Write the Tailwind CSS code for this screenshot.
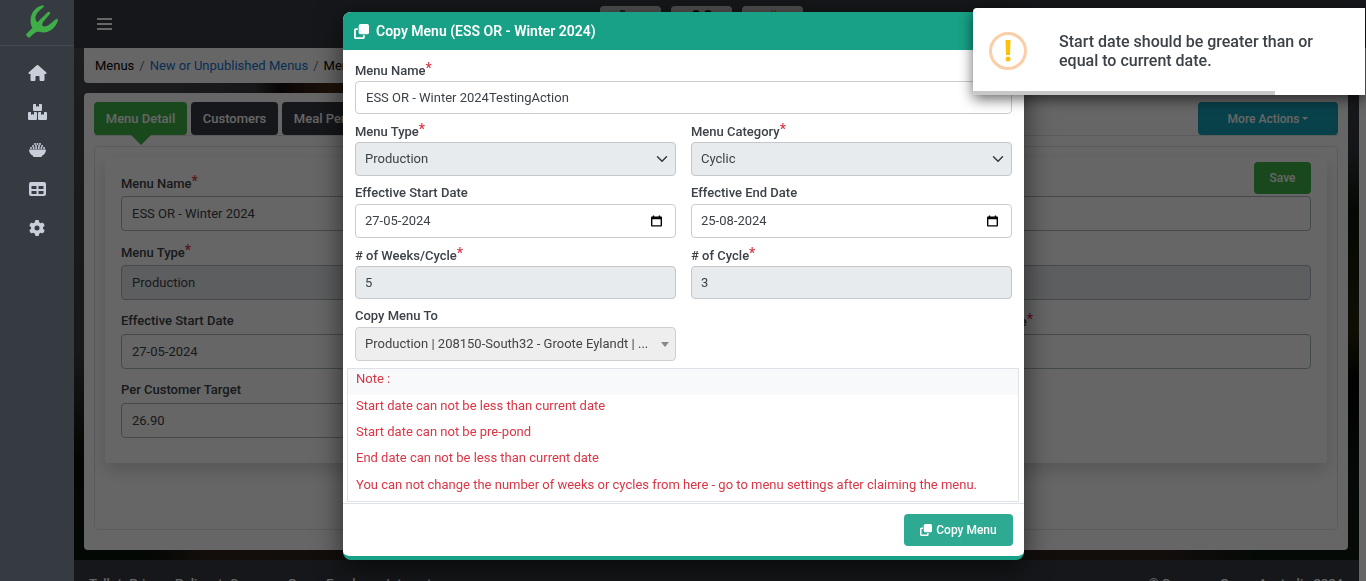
<!DOCTYPE html>
<html lang="en">
<head>
<meta charset="utf-8">
<title>Copy Menu</title>
<script src="https://cdn.jsdelivr.net/npm/@tailwindcss/browser@4"></script>
</head>
<body class="h-screen overflow-hidden bg-[#343a40] font-['Roboto',sans-serif] text-[13px] text-[#3c4248]">

<svg class="hidden" aria-hidden="true">
  <symbol id="copy" viewBox="0 0 16 16">
    <path d="M7 0h7a2 2 0 0 1 2 2v7a2 2 0 0 1-2 2H7a2 2 0 0 1-2-2V2a2 2 0 0 1 2-2z"/>
    <path d="M4 4.500H2a2 2 0 0 0-2 2V14a2 2 0 0 0 2 2h7.500a2 2 0 0 0 2-2v-2h-2v2H2V6.500h2z"/>
  </symbol>
  <symbol id="chevron" viewBox="0 0 16 16"><path d="M2 5l6 6 6-6" fill="none" stroke="#343a40" stroke-width="2" stroke-linecap="round" stroke-linejoin="round"/></symbol>
  <symbol id="calendar" viewBox="0 0 12 12"><path fill-rule="evenodd" d="M2 0h1.500v1h5V0H10v1h1a1 1 0 0 1 1 1v9a1 1 0 0 1-1 1H1a1 1 0 0 1-1-1V2a1 1 0 0 1 1-1h1zM1.500 4v6.500h9V4z"/></symbol>
</svg>

<div class="flex h-full">
  <nav class="relative z-20 flex w-[74px] shrink-0 flex-col items-center bg-[#363b42] text-[#c8cfd8]">
    <a href="#" aria-label="Home page" class="flex h-[46px] w-full justify-center border-b border-[#434950] pt-1 pl-[10px]">
      <svg class="h-[34px] w-[34px]" viewBox="75 10 102 102" fill="#3fae49"><path d="M78 101 L97 82 C84 56 96 20 129 14 C133 15 132 19 127 23 C109 35 102 50 109 62 C112 66 116 62 119 58 L143 35 C148 31 153 36 149 41 L131 62 C124 71 125 80 137 77 C152 73 160 58 171 54 C175 55 174 60 172 65 C162 88 142 99 120 94 C112 92 107 94 103 98 L88 111 C84 111 78 105 78 101Z"/></svg>
    </a>
    <div class="flex w-full flex-col pt-[7px]">
      <a href="#" aria-label="Dashboard" class="flex h-[39px] items-center justify-center"><svg class="h-4 w-[19px]" viewBox="0 0 576 512" fill="currentColor"><path d="M575.8 255.5c0 18-15 32.1-32 32.1h-32l.7 160.2c0 2.700-.2 5.400-.5 8.100V472c0 22.100-17.900 40-40 40H392c-22.100 0-40-17.900-40-40V384c0-17.700-14.300-32-32-32H256c-17.700 0-32 14.300-32 32v88c0 22.100-17.900 40-40 40H104c-22.100 0-40-17.900-40-40V287.600H32c-18 0-32-14-32-32.100 0-9 3-17 10-24L266.400 8c7-7 15-8 22-8s15 2 21 7L564.800 231.500c8 7 12 15 11 24z"/></svg></a>
      <a href="#" aria-label="Stock" class="flex h-[39px] items-center justify-center"><svg class="h-4 w-[19px]" viewBox="0 0 19 16" fill="currentColor"><path d="M6 0h2v3l1.500-1L11 3V0h2a1 1 0 0 1 1 1v5a1 1 0 0 1-1 1H6a1 1 0 0 1-1-1V1a1 1 0 0 1 1-1zM1 8h2v3l1.500-1L6 11V8h2a1 1 0 0 1 1 1v6a1 1 0 0 1-1 1H1a1 1 0 0 1-1-1V9a1 1 0 0 1 1-1zM11 8h2v3l1.500-1 1.500 1V8h2a1 1 0 0 1 1 1v6a1 1 0 0 1-1 1h-7a1 1 0 0 1-1-1V9a1 1 0 0 1 1-1z"/></svg></a>
      <a href="#" aria-label="Recipes" class="flex h-[38px] items-center justify-center"><svg class="h-[14px] w-[17px]" viewBox="0 0 17 14" fill="currentColor"><path d="M0 6.500h17c0 3-1.500 5-4 6.200V13a1 1 0 0 1-1 1H5a1 1 0 0 1-1-1v-.3C1.500 11.500 0 9.500 0 6.500z"/><g><circle cx="6" cy="1" r="1"/><circle cx="8.500" cy="1" r="1"/><circle cx="11" cy="1" r="1"/><circle cx="4" cy="3" r="1"/><circle cx="7" cy="3" r="1"/><circle cx="10" cy="3" r="1"/><circle cx="13" cy="3" r="1"/><circle cx="2" cy="5" r="1"/><circle cx="4.600" cy="5" r="1"/><circle cx="7.200" cy="5" r="1"/><circle cx="9.800" cy="5" r="1"/><circle cx="12.400" cy="5" r="1"/><circle cx="15" cy="5" r="1"/></g></svg></a>
      <a href="#" aria-label="Menus" class="flex h-[39px] items-center justify-center"><svg class="h-[14px] w-[17px]" viewBox="0 0 17 14" fill="currentColor"><path fill-rule="evenodd" d="M2 0h13a2 2 0 0 1 2 2v10a2 2 0 0 1-2 2H2a2 2 0 0 1-2-2V2a2 2 0 0 1 2-2zM2.500 4v3h5V4zM9.500 4v3h5V4zM2.500 9v3h5V9zM9.500 9v3h5V9z"/></svg></a>
      <a href="#" aria-label="Settings" class="flex h-[39px] items-center justify-center"><svg class="h-4 w-4" viewBox="0 0 512 512" fill="currentColor"><path fill-rule="evenodd" d="M495.900 166.600c3.200 8.700 .5 18.400-6.400 24.600l-43.300 39.400c1.100 8.300 1.700 16.800 1.700 25.400s-.6 17.100-1.700 25.400l43.300 39.400c6.900 6.200 9.600 15.900 6.400 24.600c-4.400 11.900-9.700 23.300-15.800 34.300l-4.700 8.100c-6.600 11-14 21.400-22.100 31.200c-5.900 7.200-15.700 9.600-24.500 6.800l-55.700-17.700c-13.400 10.300-28.200 18.900-44 25.400l-12.500 57.100c-2 9.100-9 16.300-18.200 17.800c-13.800 2.300-28 3.500-42.500 3.500s-28.700-1.200-42.500-3.500c-9.200-1.500-16.200-8.700-18.200-17.800l-12.500-57.100c-15.800-6.500-30.600-15.100-44-25.400L83.100 425.900c-8.800 2.800-18.600 .3-24.500-6.800c-8.100-9.800-15.500-20.200-22.100-31.200l-4.700-8.100c-6.100-11-11.400-22.400-15.800-34.300c-3.200-8.700-.5-18.400 6.400-24.600l43.300-39.400C64.600 273.100 64 264.600 64 256s.6-17.100 1.700-25.400L22.400 191.200c-6.900-6.200-9.600-15.900-6.400-24.600c4.400-11.900 9.700-23.300 15.800-34.300l4.700-8.100c6.600-11 14-21.400 22.100-31.200c5.900-7.200 15.700-9.600 24.500-6.800l55.700 17.700c13.400-10.300 28.200-18.900 44-25.400l12.500-57.100c2-9.100 9-16.300 18.200-17.800C227.300 1.200 241.500 0 256 0s28.700 1.200 42.500 3.500c9.200 1.500 16.200 8.700 18.200 17.800l12.500 57.100c15.800 6.500 30.600 15.100 44 25.400l55.700-17.700c8.800-2.800 18.600-.3 24.500 6.800c8.100 9.800 15.500 20.200 22.100 31.200l4.700 8.100c6.100 11 11.400 22.400 15.800 34.300zM256 336a80 80 0 1 0 0-160 80 80 0 1 0 0 160z"/></svg></a>
    </div>
  </nav>

  <div class="flex min-w-0 flex-1 flex-col">
    <header class="flex h-12 shrink-0 items-start bg-[#383b42]">
      <button type="button" aria-label="Toggle navigation" class="flex h-12 w-[53px] flex-col justify-center gap-[3px] pl-[23px]">
        <span class="h-[2px] w-[15px] bg-white"></span><span class="h-[2px] w-[15px] bg-white"></span><span class="h-[2px] w-[15px] bg-white"></span>
      </button>
      <div class="flex flex-1 justify-center gap-[10px] pt-[6px] pr-[90px]">
        <button type="button" aria-label="Cutlery" class="flex h-9 w-[61px] justify-center rounded bg-[#c4c4c4] pt-1"><svg class="h-5 w-6" viewBox="0 0 24 20" fill="none" stroke="#3d5a63" stroke-width="2"><path d="M1 1h4l3 12h11l3-9H7"/></svg></button>
        <button type="button" aria-label="People" class="flex h-9 w-[61px] justify-center rounded bg-[#c4c4c4] pt-1"><svg class="h-5 w-6" viewBox="0 0 24 20" fill="#222"><circle cx="6" cy="4" r="4"/><circle cx="18" cy="4" r="4"/><path d="M0 18a6 8 0 0 1 12 0zM12 18a6 8 0 0 1 12 0z"/></svg></button>
        <button type="button" aria-label="Support" class="flex h-9 w-[61px] justify-center rounded bg-[#c4c4c4] pt-1"><svg class="h-5 w-4" viewBox="0 0 16 20" stroke="#a59a4a" stroke-width="2" fill="none"><path d="M4 10V2M7 10V0M10 10V0M13 10V2M4 10h9v8H4z"/></svg></button>
      </div>
    </header>

    <div class="flex min-h-0 flex-1">
      <div class="flex min-w-0 flex-1 flex-col overflow-hidden">
        <div class="flex flex-col gap-[10px] bg-[linear-gradient(90deg,#0c140c_6%,#30241f_10%,#2d2320_85%,#101a12_92%),linear-gradient(180deg,#4a4b50_0%,#3c3a40_60%,#0a0f08_80%,#0c160c_100%),linear-gradient(180deg,#44464c_0%,#34363c_20%,#0c1408_32%,#26260f_55%,#030503_65%,#121c16_90%),linear-gradient(90deg,#46474b_0%,#3c3d42_14%,#140e0e_16%,#4a2c1a_20%,#30180c_60%,#0e1808_100%)] [background-position:0_100%,0_0,100%_0,0_0] [background-size:100%_10px,12px_100%,12px_100%,100%_100%] bg-no-repeat pb-[10px] pr-[11px] pl-[10px]">
          <nav aria-label="Breadcrumb" class="flex h-[35px] shrink-0 items-center gap-[5px] rounded-b bg-white px-[11px] text-black">
            <a href="#">Menus</a><span class="text-[#6c757d]">/</span><a href="#" class="text-[#1473cf]">New or Unpublished Menus</a><span class="text-[#6c757d]">/</span><span>Menu Detail</span>
          </nav>
          <main class="rounded bg-white px-[10px] pt-[9px] pb-5">
            <div class="flex h-[34px] gap-1 border-b border-[#e2e4e6] font-medium text-white">
              <a href="#" class="relative flex h-[33px] w-[93px] items-center justify-center rounded-sm bg-[#40b34a]">Menu Detail
                <svg class="absolute top-[33px] left-[37px] h-[10px] w-5" viewBox="0 0 20 10" fill="#40b34a"><path d="M0 0h20L10 10z"/></svg></a>
              <a href="#" class="flex h-[33px] w-[87px] items-center justify-center rounded-sm bg-[#383b42]">Customers</a>
              <a href="#" class="flex h-[33px] w-[100px] items-center justify-center rounded-sm bg-[#383b42]">Meal Periods</a>
              <button type="button" class="ml-auto flex h-[33px] w-[140px] items-center justify-center gap-[3px] rounded-sm bg-[#17a2b8] text-xs font-medium">More Actions<svg class="h-[3px] w-[6px]" viewBox="0 0 6 3" fill="currentColor"><path d="M0 0h6L3 3z"/></svg></button>
            </div>
            <section class="mt-[10px] rounded-sm border border-[#dee2e6] px-[10px] pt-[10px] pb-[66px]">
              <form class="relative grid grid-cols-3 gap-x-4 gap-y-3 rounded bg-white px-4 pt-[17px] pb-[25px] shadow-[0_8px_16px_rgba(0,0,0,0.15)]">
                <button type="button" class="absolute top-[5px] right-4 h-8 w-[57px] rounded-sm bg-[#40b34a] text-xs font-medium text-white">Save</button>
                <div class="col-span-3 flex flex-col gap-1"><label for="p1" class="h-[18px] leading-[18px] font-medium">Menu Name<span class="align-[2px] text-sm leading-none text-[#dc3545]">*</span></label><input id="p1" class="h-[35px] w-full rounded border border-[#adb5bd] px-[10px]" value="ESS OR - Winter 2024"></div>
                <div class="col-span-3 flex flex-col gap-1"><label for="p2" class="h-[18px] leading-[18px] font-medium">Menu Type<span class="align-[2px] text-sm leading-none text-[#dc3545]">*</span></label><input id="p2" readonly class="h-[35px] w-full rounded border border-[#adb5bd] bg-[#e9ecef] px-[10px]" value="Production"></div>
                <div class="flex flex-col gap-1"><label for="p3" class="h-[18px] leading-[18px] font-medium">Effective Start Date</label><input id="p3" class="h-[35px] w-full rounded border border-[#adb5bd] px-[10px]" value="27-05-2024"></div>
                <div class="flex flex-col gap-1"><label for="p4" class="h-[18px] leading-[18px] font-medium">Effective End Date</label><input id="p4" class="h-[35px] w-full rounded border border-[#adb5bd] px-[10px]" value="25-08-2024"></div>
                <div class="flex flex-col gap-1"><label for="p5" class="h-[18px] leading-[18px] font-medium"># of Weeks/Cycle<span class="align-[2px] text-sm leading-none text-[#dc3545]">*</span></label><input id="p5" class="h-[35px] w-full rounded border border-[#adb5bd] px-[10px]" value="5"></div>
                <div class="flex flex-col gap-1"><label for="p6" class="h-[18px] leading-[18px] font-medium">Per Customer Target</label><input id="p6" class="h-[35px] w-full rounded border border-[#adb5bd] px-[10px]" value="26.90"></div>
              </form>
            </section>
          </main>
        </div>
        <footer class="flex h-12 shrink-0 items-center justify-between bg-[#383b42] pr-4 pl-[15px] font-medium text-white">
          <div class="flex gap-2"><a href="#">Tell</a><span>|</span><a href="#">Privacy Policy</a><span>|</span><a href="#">Compass Group Employee Intranet</a></div>
          <span>© Compass Group Australia 2024</span>
        </footer>
      </div>
      <div class="w-[7px] shrink-0 bg-white"></div>
    </div>
  </div>
</div>

<div class="fixed inset-0 z-10 bg-black/60"></div>

<div class="fixed inset-0 z-30 flex items-start justify-center pt-3 pl-px">
  <div role="dialog" aria-labelledby="dialog-title" class="w-full max-w-[681px] overflow-hidden rounded-lg border-b-4 border-[#18a186] bg-white shadow-[0_8px_28px_rgba(0,0,0,0.6)]">
    <h2 id="dialog-title" class="flex h-[38px] items-center gap-[7px] bg-[#18a186] px-[11px] text-sm font-semibold text-white"><svg class="h-[15px] w-[15px]" fill="currentColor"><use href="#copy"/></svg>Copy Menu (ESS OR - Winter 2024)</h2>
    <form>
      <div class="grid grid-cols-2 gap-x-[15px] gap-y-2 px-3 pt-[11px] pb-[5px]">
        <div class="col-span-2 flex flex-col gap-[2px]"><label for="f1" class="h-[18px] leading-[18px] font-medium">Menu Name<span class="align-[2px] text-sm leading-none text-[#dc3545]">*</span></label><input id="f1" class="h-[33px] w-full rounded border border-[#c9cbcd] px-[10px]" value="ESS OR - Winter 2024TestingAction"></div>
        <div class="flex flex-col gap-[2px]"><label for="f2" class="h-[18px] leading-[18px] font-medium">Menu Type<span class="align-[2px] text-sm leading-none text-[#dc3545]">*</span></label><div class="relative"><select id="f2" class="h-[34px] w-full appearance-none rounded border border-[#c4c7ca] bg-[#e7ebee] px-[9px]"><option>Production</option></select><svg class="pointer-events-none absolute top-[11px] right-2 h-3 w-3"><use href="#chevron"/></svg></div></div>
        <div class="flex flex-col gap-[2px]"><label for="f3" class="h-[18px] leading-[18px] font-medium">Menu Category<span class="align-[2px] text-sm leading-none text-[#dc3545]">*</span></label><div class="relative"><select id="f3" class="h-[34px] w-full appearance-none rounded border border-[#c4c7ca] bg-[#e7ebee] px-[9px]"><option>Cyclic</option></select><svg class="pointer-events-none absolute top-[11px] right-2 h-3 w-3"><use href="#chevron"/></svg></div></div>
        <div class="flex flex-col gap-[2px]"><label for="f4" class="h-[18px] leading-[18px] font-medium">Effective Start Date</label><div class="flex h-[34px] items-center rounded border border-[#c9cbcd] pr-[13px]"><input id="f4" class="min-w-0 flex-1 px-[9px]" value="27-05-2024"><button type="button" aria-label="Pick start date"><svg class="h-3 w-[11px]" fill="#000"><use href="#calendar"/></svg></button></div></div>
        <div class="flex flex-col gap-[2px]"><label for="f5" class="h-[18px] leading-[18px] font-medium">Effective End Date</label><div class="flex h-[34px] items-center rounded border border-[#c9cbcd] pr-[13px]"><input id="f5" class="min-w-0 flex-1 px-[9px]" value="25-08-2024"><button type="button" aria-label="Pick end date"><svg class="h-3 w-[11px]" fill="#000"><use href="#calendar"/></svg></button></div></div>
        <div class="flex flex-col gap-[2px]"><label for="f6" class="h-[18px] leading-[18px] font-medium"># of Weeks/Cycle<span class="align-[2px] text-sm leading-none text-[#dc3545]">*</span></label><input id="f6" readonly class="h-[33px] w-full rounded border border-[#c4c7ca] bg-[#e7ebee] px-[9px]" value="5"></div>
        <div class="flex flex-col gap-[2px]"><label for="f7" class="h-[18px] leading-[18px] font-medium"># of Cycle<span class="align-[2px] text-sm leading-none text-[#dc3545]">*</span></label><input id="f7" readonly class="h-[33px] w-full rounded border border-[#c4c7ca] bg-[#e7ebee] px-[9px]" value="3"></div>
        <div class="flex flex-col gap-[2px]"><label for="f8" class="h-[18px] leading-[18px] font-medium">Copy Menu To</label><div class="relative"><select id="f8" class="h-[34px] w-full appearance-none rounded border border-[#ced0d6] bg-[#eeeeee] px-[9px] text-[#444444]"><option>Production | 208150-South32 - Groote Eylandt | ...</option></select><svg class="pointer-events-none absolute top-[15px] right-[7px] h-[5px] w-2" viewBox="0 0 8 5" fill="#888888"><path d="M0 0h8L4 5z"/></svg></div></div>
      </div>
      <div class="pt-[2px] pr-[5px] pl-1">
        <table class="h-[134px] w-full border-separate border-spacing-0 border border-[#dee2e6] text-[#dc3545]">
          <tbody>
            <tr class="bg-[#f8f9fb]"><td class="px-2 pb-[6px] leading-4">Note :</td></tr>
            <tr><td class="px-2 pb-[6px] leading-4">Start date can not be less than current date</td></tr>
            <tr><td class="px-2 pb-[6px] leading-4">Start date can not be pre-pond</td></tr>
            <tr><td class="px-2 pb-[6px] leading-4">End date can not be less than current date</td></tr>
            <tr><td class="px-2 pb-[6px] leading-4">You can not change the number of weeks or cycles from here - go to menu settings after claiming the menu.</td></tr>
          </tbody>
        </table>
      </div>
      <div class="mt-px flex justify-end border-t border-[#dee2e6] px-[11px] py-[10px]">
        <button type="button" class="flex h-8 w-[109px] items-center justify-center gap-1 rounded-sm bg-[#2eaa92] text-xs font-medium text-white"><svg class="h-3 w-3" fill="currentColor"><use href="#copy"/></svg>Copy Menu</button>
      </div>
    </form>
  </div>
</div>

<div role="alert" class="fixed top-2 right-px z-40 w-[392px] overflow-hidden rounded-l bg-white shadow-[0_4px_14px_rgba(0,0,0,0.6)]">
  <div class="flex h-[83px] items-center gap-8 pt-[2px] pr-8 pl-4">
    <svg class="h-[38px] w-[38px] shrink-0" viewBox="0 0 38 38"><circle cx="19" cy="19" r="17.500" fill="none" stroke="#facea8" stroke-width="3"/><path d="M16.500 8h5l-.5 15h-4z" fill="#ffc107"/><circle cx="19" cy="27" r="2.500" fill="#ffc107"/></svg>
    <p class="text-base leading-[19px] font-medium">Start date should be greater than or equal to current date.</p>
  </div>
  <div class="h-1 w-[302px] bg-[#c8c8c8]"></div>
</div>
</body>
</html>
